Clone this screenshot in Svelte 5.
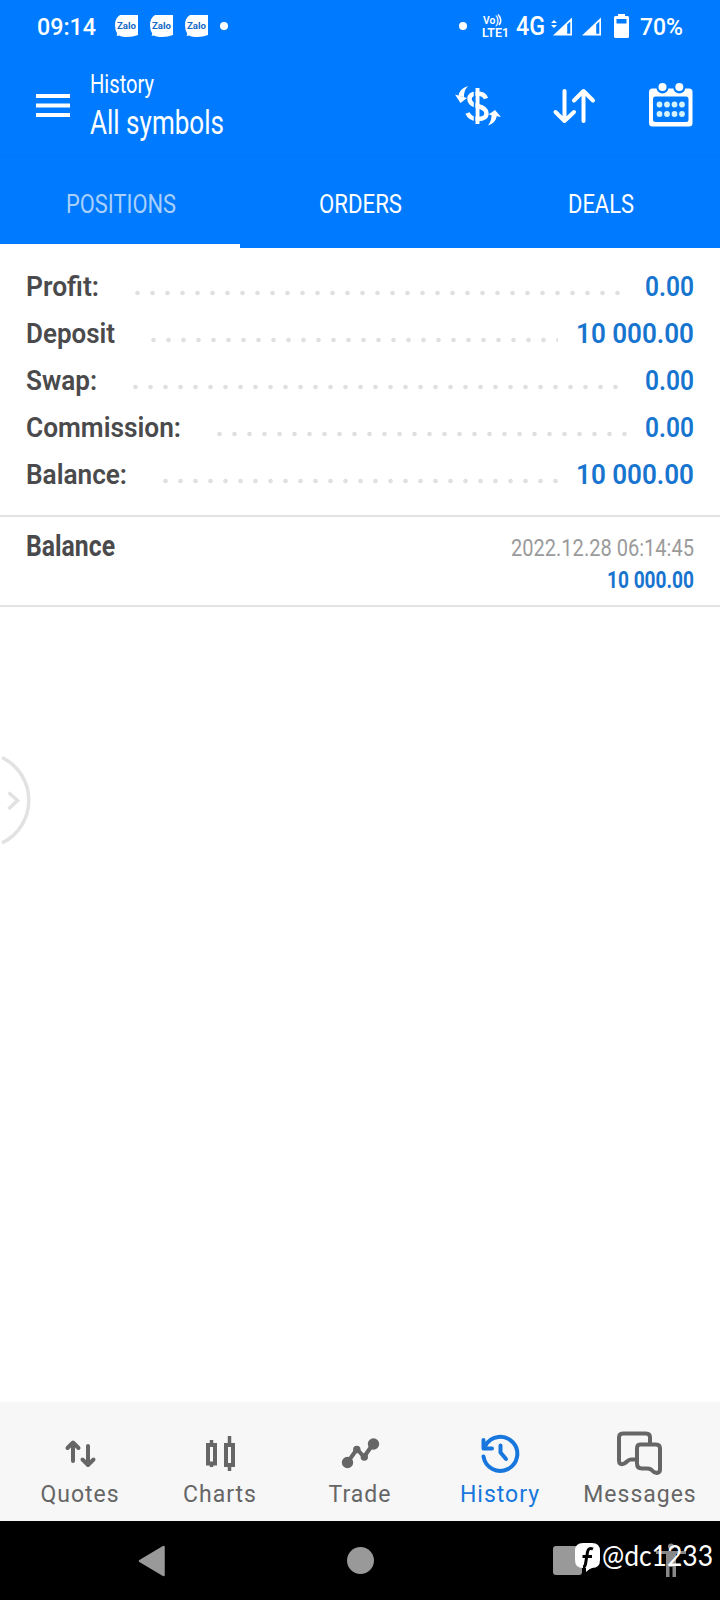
<script>
    const tabs = [
        { name: "POSITIONS", width: 110 },
        { name: "ORDERS", width: 83 },
        { name: "DEALS", width: 66 }
    ];

    const summary = [
        { label: "Profit:", labelWidth: 73, value: "0.00", valueWidth: 49 },
        { label: "Deposit", labelWidth: 89, value: "10 000.00", valueWidth: 118 },
        { label: "Swap:", labelWidth: 71, value: "0.00", valueWidth: 49 },
        { label: "Commission:", labelWidth: 155, value: "0.00", valueWidth: 49 },
        { label: "Balance:", labelWidth: 101, value: "10 000.00", valueWidth: 118 }
    ];

    const pages = ["Quotes", "Charts", "Trade", "History", "Messages"];

    let activeTab = $state("POSITIONS");
    let activePage = $state("History");
</script>

<!-- one line of text squeezed to a fixed width, capitals centred in the box -->
{#snippet fit(text, width, size)}
    <svg class="fit" {width} height={size}>
        <text x="0" y={size * 0.8555} font-size={size} textLength={width} lengthAdjust="spacingAndGlyphs">{text}</text>
    </svg>
{/snippet}

<div class="screen">
    <header>
        <div class="status">
            <div class="status-left">
                <span class="clock">{@render fit("09:14", 59, 24)}</span>
                {#each [1, 2, 3] as n}
                    <svg class="zalo" width="23" height="23" viewBox="0 0 23 23">
                        <path d="M5 0H23V20Q17 22.500 10 22Q6 21.500 4 20.500L1.500 21Q2.500 19.500 2 18Q0 15 0 10Q0 3 5 0Z" fill="#fff" />
                        <text x="2" y="14" font-size="8.500" textLength="19" lengthAdjust="spacingAndGlyphs">Zalo</text>
                    </svg>
                {/each}
                <span class="dot"></span>
            </div>
            <div class="status-right">
                <span class="dot"></span>
                <svg class="volte" width="28" height="24" viewBox="0 0 28 24">
                    <text x="1" y="10" font-size="11" textLength="16" lengthAdjust="spacingAndGlyphs">Vo)</text>
                    <path d="M16 0.500Q21 6 17 11" fill="none" stroke="#fff" stroke-width="1.500" />
                    <text x="0" y="23" font-size="13.500" textLength="27" lengthAdjust="spacingAndGlyphs">LTE1</text>
                </svg>
                <span class="network">{@render fit("4G", 29, 26)}</span>
                <svg class="signal-one" width="22" height="19" viewBox="0 0 22 19">
                    <path d="M0 6L3 3L6 6ZM0 8L3 11L6 8Z" fill="#fff" />
                    <path d="M2 18.500L21 0.500V18.500Z" fill="#fff" />
                    <path d="M16.200 7.500L19.300 4.500V16.700H16.200Z" fill="#007bff" />
                </svg>
                <svg class="signal-two" width="20" height="19" viewBox="0 0 20 19">
                    <path d="M0 18.500L19 0.500V18.500Z" fill="#fff" />
                    <path d="M14.200 7.500L17.300 4.500V16.700H14.200Z" fill="#007bff" />
                </svg>
                <svg class="battery" width="15" height="24" viewBox="0 0 15 24">
                    <path d="M4 0H11V2H13.500Q15 2 15 3.500V22.500Q15 24 13.500 24H1.500Q0 24 0 22.500V3.500Q0 2 1.500 2H4Z" fill="#fff" />
                    <path d="M2.500 5H12.500V9.500H2.500Z" fill="#007bff" />
                </svg>
                <span class="percent">{@render fit("70%", 43, 24)}</span>
            </div>
        </div>

        <div class="appbar">
            <button class="menu" aria-label="Menu">
                <svg width="34" height="24" viewBox="0 0 34 24">
                    <path d="M0 2H34M0 11.500H34M0 21H34" stroke="#fff" stroke-width="4" />
                </svg>
            </button>
            <div class="heading">
                {@render fit("History", 64, 25)}
                {@render fit("All symbols", 134, 33)}
            </div>
            <div class="actions">
                <button aria-label="Currency">
                    <svg width="46" height="40" viewBox="0 0 46 40" fill="none" stroke="#fff">
                        <path d="M22.500 2V38" stroke-width="4" />
                        <path d="M31 12.500Q29 7.500 22.500 7.500Q14.500 7.500 14.500 13Q14.500 18 22.500 20Q31.500 22 31.500 27.500Q31.500 33 22.500 33Q15 33 12.500 27" stroke-width="4.500" />
                        <path d="M19.500 4V36" stroke="#007bff" stroke-width="1.500" />
                        <path d="M13 0Q4 3 3.500 10L9 11Q8.500 5 13 0Z" fill="#fff" stroke="none" />
                        <path d="M0 8.500L12 12L5.500 17Z" fill="#fff" stroke="none" />
                        <path d="M33 39.500Q41 37 42 29L36.500 28Q37 34 33 39.500Z" fill="#fff" stroke="none" />
                        <path d="M33.500 28.500L40 24L46 31Z" fill="#fff" stroke="none" />
                    </svg>
                </button>
                <button class="sort" aria-label="Sort">
                    <svg width="42" height="36" viewBox="0 0 42 36" fill="none" stroke="#fff" stroke-width="4" stroke-linecap="round" stroke-linejoin="round">
                        <path d="M11.500 3V33M2.500 24L11.500 33L21 24" />
                        <path d="M30.500 33V3M21 12.500L30.500 3L40 12.500" />
                    </svg>
                </button>
                <button class="calendar" aria-label="Period">
                    <svg width="44" height="44" viewBox="0 0 44 44">
                        <rect y="5.500" width="43.500" height="38" rx="3.500" fill="#fff" />
                        <rect x="4" y="13.500" width="35.500" height="25.500" rx="2.500" fill="#007bff" />
                        <circle cx="13.500" cy="4.500" r="6" fill="#007bff" />
                        <circle cx="30.300" cy="4.500" r="6" fill="#007bff" />
                        <circle cx="13.500" cy="4" r="4" fill="#fff" />
                        <circle cx="30.300" cy="4" r="4" fill="#fff" />
                        {#each [21.500, 31] as cy}
                            {#each [10.500, 18, 25.500, 33] as cx}
                                <circle {cx} {cy} r="2.900" fill="#d5f3ff" />
                            {/each}
                        {/each}
                    </svg>
                </button>
            </div>
        </div>

        <div class="tabs">
            {#each tabs as tab}
                <button class:active={activeTab === tab.name} onclick={() => activeTab = tab.name}>
                    {@render fit(tab.name, tab.width, 26)}
                </button>
            {/each}
        </div>
    </header>

    <main>
        <section class="summary">
            {#each summary as row}
                <div class="row">
                    {@render fit(row.label, row.labelWidth, 27)}
                    <span class="leader"></span>
                    <span class="amount">{@render fit(row.value, row.valueWidth, 27)}</span>
                </div>
            {/each}
        </section>

        <section class="deal">
            <div class="deal-name">{@render fit("Balance", 89, 30)}</div>
            <div class="deal-info">
                <span class="date">{@render fit("2022.12.28 06:14:45", 183, 24)}</span>
                <span class="amount">{@render fit("10 000.00", 87, 24)}</span>
            </div>
        </section>

        <svg class="handle" width="33" height="92" viewBox="0 0 33 92" fill="none" stroke="#e2e2e2" stroke-width="3.500">
            <path d="M1 2.500A47.500 47.500 0 0 1 1 88" />
            <path d="M7.500 37.500L16.500 45.500L7.500 54" />
        </svg>
    </main>

    <nav>
        {#each pages as page}
            <button class:active={activePage === page} onclick={() => activePage = page}>
                <svg width="46" height="46" viewBox="0 0 46 46" fill="none" stroke="currentColor" stroke-width="4" stroke-linecap="round" stroke-linejoin="round">
                    {#if page === "Quotes"}
                        <path d="M16 31V13M10.500 18L16 12.500L21.500 18M31 16V34M25.500 29.500L31 35L36.500 29.500" />
                    {:else if page === "Charts"}
                        <path d="M14.500 10V37M32.500 6V41" stroke-width="3.500" stroke-linecap="butt" />
                        <path d="M11 15H18V33.500H11ZM29 15H36V35H29Z" fill="#f7f7f7" stroke-linejoin="miter" />
                    {:else if page === "Trade"}
                        <path d="M10.500 32.500L20 19L27 27L36 14" />
                        <circle cx="10.500" cy="32.500" r="3.700" fill="currentColor" />
                        <circle cx="36.500" cy="14" r="3.700" fill="currentColor" />
                        <circle cx="19.800" cy="19.500" r="1.700" fill="currentColor" />
                        <circle cx="27.300" cy="27" r="1.700" fill="currentColor" />
                    {:else if page === "History"}
                        <path d="M6.500 26.500A17 17 0 1 0 8.500 15.500" />
                        <path d="M6.500 10V18.500H15" />
                        <path d="M23.500 15.500V22.500L29 29" />
                    {:else}
                        <g transform="translate(0 1.500)">
                            <path d="M18.500 28H14Q12 28 10 30Q6 34 3 32Q2 31.500 2 29V6Q2 2 6 2H29Q33 2 33 6V13" />
                            <path d="M23 13H39Q43 13 43 17V38Q43 41 40 41.500Q36.500 41 34 38Q32.500 37 30 37H25Q20 37 20 32V17Q20 13 23 13Z" fill="#f7f7f7" />
                        </g>
                    {/if}
                </svg>
                <span>{page}</span>
            </button>
        {/each}
    </nav>

    <footer>
        <svg class="back" width="28" height="32" viewBox="0 0 28 32">
            <path d="M2 16L25.500 2V30Z" fill="#999" stroke="#999" stroke-width="2.500" stroke-linejoin="round" />
        </svg>
        <span class="home"></span>
        <span class="recents"></span>
        <svg class="person" width="30" height="36" viewBox="0 0 30 36" fill="#888">
            <circle cx="15" cy="3.500" r="3" />
            <path d="M0 8H30V11H20V34H16.500V24H13.500V34H10V11H0Z" />
        </svg>
        <div class="watermark">
            <svg width="25" height="30" viewBox="0 0 25 30">
                <path d="M8 0H17Q25 0 25 8V17Q25 25 17 25Q14 26 11 29V25H8Q0 25 0 17V8Q0 0 8 0Z" fill="#fff" />
                <path d="M18 6Q13.500 4 12.500 9L10.500 21Q10 24 8 24M7.500 13.500H17" fill="none" stroke="#000" stroke-width="3" />
            </svg>
            {@render fit("@dc1233", 111, 28)}
        </div>
    </footer>
</div>

<style>
    :global(body) {
        margin: 0;
        background: #fff;
    }

    .screen {
        display: flex;
        flex-direction: column;
        width: 720px;
        height: 1600px;
        overflow: hidden;
        font-family: Roboto, "Liberation Sans", sans-serif;
        background: #fff;
    }

    svg {
        display: block;
        flex: none;
        overflow: visible;
    }

    .fit text {
        fill: currentColor;
    }

    button {
        display: flex;
        padding: 0;
        border: 0;
        background: none;
        color: inherit;
        font: inherit;
    }

    header {
        flex: none;
        height: 248px;
        background: #007bff;
        color: #fff;
    }

    .status {
        display: flex;
        justify-content: space-between;
        height: 52px;
        margin-bottom: 1px;
        padding: 0 37px 0 37px;
        font-weight: 500;
    }

    .status-left,
    .status-right {
        display: flex;
        align-items: center;
    }

    .zalo {
        margin-right: 12px;
    }

    .clock {
        margin-right: 19px;
    }

    .zalo text {
        fill: #1468c8;
        font-weight: 700;
    }

    .dot {
        width: 8px;
        height: 8px;
        border-radius: 50%;
        background: #fff;
    }

    .volte {
        margin-left: 15px;
        margin-right: 6px;
    }

    .volte text {
        fill: #fff;
        font-weight: 600;
    }

    .network {
        margin-right: 6px;
    }

    .signal-one {
        margin-right: 9px;
    }

    .signal-two {
        margin-right: 12px;
    }

    .battery {
        margin-right: 11px;
    }

    .appbar {
        display: flex;
        align-items: center;
        box-sizing: border-box;
        height: 104px;
        padding: 2px 27px 0 36px;
        border-bottom: 1px solid #0077f6;
    }

    .heading {
        display: flex;
        flex-direction: column;
        gap: 9px;
        margin-left: 20px;
    }

    .actions {
        display: flex;
        align-items: center;
        margin-left: auto;
    }

    .sort {
        margin: 0 54px 0 52px;
    }

    .calendar {
        margin-top: -2px;
    }

    .tabs {
        display: grid;
        grid-template-columns: repeat(3, 1fr);
        height: 91px;
    }

    .tabs button {
        align-items: center;
        justify-content: center;
        padding: 7px 0 0 1px;
        border-bottom: 4px solid transparent;
    }

    .tabs .active {
        border-color: #fff;
        color: #a9d0fa;
    }

    main {
        position: relative;
        flex: 1;
    }

    .summary {
        padding: 15px 26px 17px 26px;
        border-bottom: 2px solid #e2e2e2;
        color: #4a4a4c;
        font-weight: 600;
    }

    .row {
        display: flex;
        align-items: center;
        height: 47px;
    }

    .leader {
        flex: 1;
        height: 6px;
        margin: 12px 18px 0 31px;
        background: radial-gradient(circle, #e0e0e0 1.8px, transparent 2.7px) left center / 15px 6px repeat-x;
    }

    .amount {
        color: #1775cf;
    }

    .deal {
        display: flex;
        justify-content: space-between;
        box-sizing: border-box;
        height: 90px;
        padding: 13px 26px 0 26px;
        border-bottom: 2px solid #e4e4e4;
    }

    .deal-name {
        color: #4a4a4c;
        font-weight: 700;
    }

    .deal-info {
        display: flex;
        flex-direction: column;
        align-items: flex-end;
        gap: 8px;
        padding-top: 5px;
    }

    .date {
        color: #9b9b9b;
    }

    .deal-info .amount {
        font-weight: 700;
    }

    .handle {
        position: absolute;
        left: 1px;
        top: 507px;
    }

    nav {
        display: grid;
        grid-template-columns: repeat(5, 1fr);
        flex: none;
        box-sizing: border-box;
        height: 119px;
        padding: 28px 10px 0;
        background: #f7f7f7;
        color: #666;
        font-size: 23px;
    }

    nav button {
        flex-direction: column;
        align-items: center;
        gap: 5px;
        letter-spacing: 1px;
        line-height: 28px;
    }

    nav .active {
        color: #1777dd;
    }

    footer {
        position: relative;
        display: flex;
        align-items: center;
        flex: none;
        height: 79px;
        padding-left: 138px;
        background: #000;
    }

    .home {
        width: 27px;
        height: 27px;
        margin-left: 181px;
        border-radius: 50%;
        background: #999;
    }

    .recents {
        width: 29px;
        height: 29px;
        margin-left: 179px;
        border-radius: 3px;
        background: #999;
    }

    .person {
        margin-left: 74px;
    }

    .watermark {
        position: absolute;
        left: 575px;
        top: 22px;
        display: flex;
        gap: 2px;
        color: #fff;
        font-family: Lato, sans-serif;
    }

    .watermark .fit {
        margin-top: -1px;
    }
</style>
